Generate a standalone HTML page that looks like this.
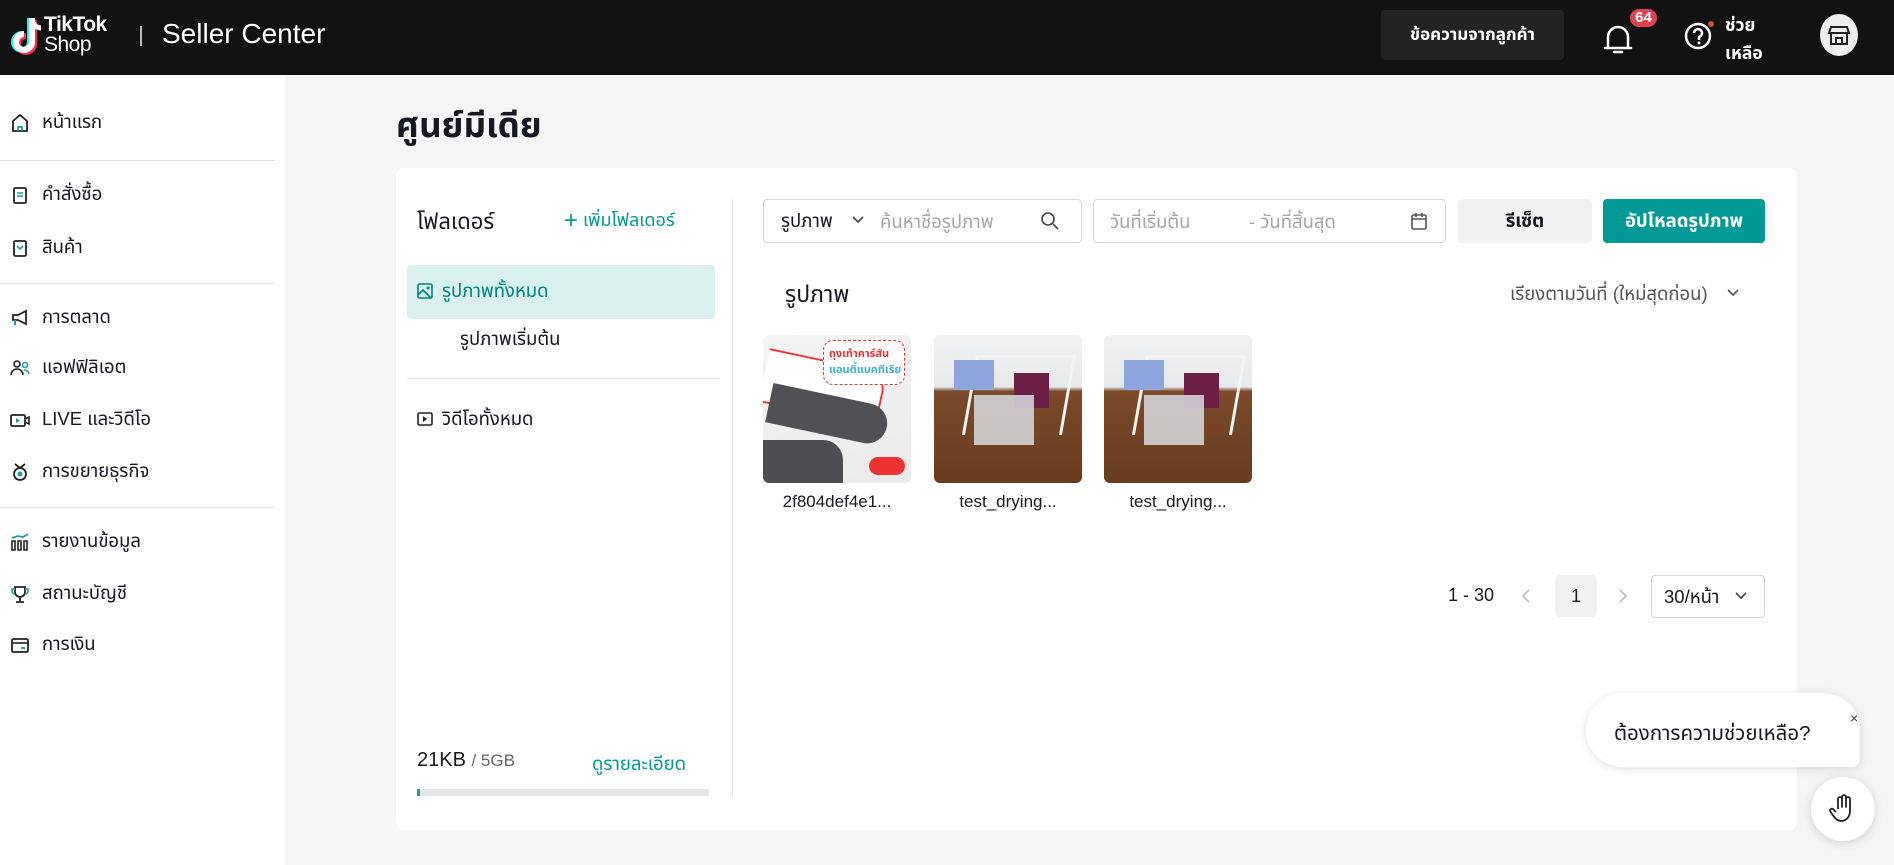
<!DOCTYPE html>
<html><head><meta charset="utf-8"><style>
*{box-sizing:border-box;margin:0;padding:0}
body{width:1894px;height:865px;overflow:hidden;background:#f5f5f5;font-family:"Liberation Sans","Noto Sans Thai",sans-serif;color:#161823;position:relative}
.a{position:absolute}
.hdr{left:0;top:0;width:1894px;height:75px;background:#121212}
.side{left:0;top:75px;width:285px;height:790px;background:#fff}
.si{position:absolute;left:10px;display:flex;align-items:center;font-size:18.5px;height:30px}
.si svg{width:20px;height:20px;margin-right:12px}
.hr{position:absolute;left:0;width:275px;height:1px;background:#e3e3e3}
.card{left:396px;top:168px;width:1401px;height:662px;background:#fff;border-radius:8px}
.inp{border:1px solid #d6d6d6;border-radius:4px;background:#fff}
.ph{color:#a6a6a6;font-size:17px}
.thumb{width:148px;height:148px;border-radius:6px;overflow:hidden;top:335px}
.lbl{top:492px;font-size:17px;width:148px;text-align:center}
</style></head><body>
<div class="a hdr"></div>
<svg class="a" style="left:10px;top:16px" width="34" height="42" viewBox="0 0 34 42"><path d="M22 2v24a8 8 0 1 1-8-8" fill="none" stroke="#25f4ee" stroke-width="6" transform="translate(-2,0)"/><path d="M22 2v24a8 8 0 1 1-8-8" fill="none" stroke="#fe2c55" stroke-width="6" transform="translate(2,2)"/><path d="M22 2v24a8 8 0 1 1-8-8" fill="none" stroke="#fff" stroke-width="6"/><path d="M22 4c1 5 5 8 9 8" fill="none" stroke="#fff" stroke-width="5"/></svg>
<div class="a" style="left:44px;top:15px;color:#fff;font-weight:bold;font-size:21px;line-height:20px;letter-spacing:-0.5px">TikTok<br><span style="font-weight:normal">Shop</span></div>
<div class="a" style="left:140px;top:26px;width:2px;height:20px;background:#bbb"></div>
<div class="a" style="left:162px;top:18px;color:#fff;font-size:28px">Seller Center</div>
<div class="a" style="left:1381px;top:10px;width:183px;height:50px;background:#232323;border-radius:4px;color:#fff;font-size:17px;font-weight:bold;text-align:center;line-height:50px">ข้อความจากลูกค้า</div>
<svg class="a" style="left:1603px;top:22px" width="30" height="34" viewBox="0 0 30 34"><path d="M5 26V15a10 10 0 0 1 20 0v11zM2 26h26M11 30h8" fill="none" stroke="#fff" stroke-width="2.5" stroke-linecap="round"/></svg>
<div class="a" style="left:1628px;top:7px;width:31px;height:22px;background:#e0434f;border:2px solid #121212;border-radius:11px;color:#fff;font-size:15px;font-weight:bold;text-align:center;line-height:18px">64</div>
<svg class="a" style="left:1682px;top:18px" width="34" height="34" viewBox="0 0 34 34"><circle cx="16" cy="18" r="12" fill="none" stroke="#fff" stroke-width="2.5"/><path d="M12 15a4 4 0 1 1 5 4v3" fill="none" stroke="#fff" stroke-width="2.5"/><circle cx="17" cy="25" r="1.5" fill="#fff"/><circle cx="29" cy="6" r="3" fill="#e0434f"/></svg>
<div class="a" style="left:1725px;top:11px;color:#fff;font-size:17.5px;font-weight:bold;line-height:28px">ช่วย<br>เหลือ</div>
<div class="a" style="left:1820px;top:14px;width:38px;height:42px;border-radius:50%;background:#eee"></div>
<svg class="a" style="left:1826px;top:22px" width="26" height="26" viewBox="0 0 26 26"><path d="M5 5h16l2 6H3zM5 11v11h16V11M10 22v-6h6v6" fill="none" stroke="#222" stroke-width="2"/></svg>

<div class="a side"></div>
<div class="si" style="top:108px"><svg viewBox="0 0 20 20"><path d="M3 18V8l7-6 7 6v10z" fill="none" stroke="#222" stroke-width="1.8"/><path d="M8 18v-4h4v4" stroke="#17a39b" stroke-width="1.8" fill="none"/></svg>หน้าแรก</div>
<div class="hr" style="top:160px"></div>
<div class="si" style="top:180px"><svg viewBox="0 0 20 20"><rect x="4" y="3" width="12" height="15" rx="1.5" fill="none" stroke="#222" stroke-width="1.8"/><path d="M7 8h6M7 11h6" stroke="#17a39b" stroke-width="1.6"/></svg>คำสั่งซื้อ</div>
<div class="si" style="top:233px"><svg viewBox="0 0 20 20"><rect x="4" y="3" width="12" height="15" rx="1.5" fill="none" stroke="#222" stroke-width="1.8"/><path d="M7 8l3 3 3-3" stroke="#17a39b" stroke-width="1.6" fill="none"/></svg>สินค้า</div>
<div class="hr" style="top:283px"></div>
<div class="si" style="top:303px"><svg viewBox="0 0 20 20"><path d="M3 7h5l8-4v13l-8-4H3z" fill="none" stroke="#222" stroke-width="1.8"/><path d="M5 12v5" stroke="#17a39b" stroke-width="2"/></svg>การตลาด</div>
<div class="si" style="top:353px"><svg viewBox="0 0 20 20"><circle cx="7" cy="6" r="3" fill="none" stroke="#222" stroke-width="1.6"/><path d="M1 17a6 6 0 0 1 12 0" fill="none" stroke="#222" stroke-width="1.6"/><circle cx="15" cy="7" r="2.5" fill="none" stroke="#17a39b" stroke-width="1.6"/><path d="M14 12a5 5 0 0 1 5 4" fill="none" stroke="#17a39b" stroke-width="1.6"/></svg>แอฟฟิลิเอต</div>
<div class="si" style="top:405px"><svg viewBox="0 0 20 20"><rect x="1" y="5" width="14" height="11" rx="1.5" fill="none" stroke="#222" stroke-width="1.8"/><path d="M15 9l4-2v7l-4-2" fill="none" stroke="#222" stroke-width="1.6"/><path d="M6 8l4 2.5-4 2.5z" fill="#17a39b"/></svg>LIVE และวิดีโอ</div>
<div class="si" style="top:457px"><svg viewBox="0 0 20 20"><circle cx="10" cy="12" r="6" fill="none" stroke="#222" stroke-width="1.8"/><path d="M5 2l5 4 5-4" fill="none" stroke="#222" stroke-width="1.8"/><circle cx="10" cy="12" r="2.5" fill="#17a39b"/></svg>การขยายธุรกิจ</div>
<div class="hr" style="top:507px"></div>
<div class="si" style="top:527px"><svg viewBox="0 0 20 20"><path d="M2 9h3v9H2zM8 9h3v9H8zM14 9h3v9h-3z" fill="none" stroke="#222" stroke-width="1.6"/><path d="M2 6l6-2 5 1 5-3" fill="none" stroke="#17a39b" stroke-width="1.8"/></svg>รายงานข้อมูล</div>
<div class="si" style="top:579px"><svg viewBox="0 0 20 20"><path d="M5 3h10v5a5 5 0 0 1-10 0zM10 13v4M6 18h8" fill="none" stroke="#222" stroke-width="1.8"/><path d="M5 5H2v2a3 3 0 0 0 3 3M15 5h3v2a3 3 0 0 1-3 3" fill="none" stroke="#17a39b" stroke-width="1.6"/></svg>สถานะบัญชี</div>
<div class="si" style="top:630px"><svg viewBox="0 0 20 20"><rect x="2" y="4" width="16" height="13" rx="1.5" fill="none" stroke="#222" stroke-width="1.8"/><path d="M2 8h16" stroke="#222" stroke-width="1.6"/><path d="M11 13h4" stroke="#17a39b" stroke-width="1.8"/></svg>การเงิน</div>

<div class="a" style="left:396px;top:100px;font-size:35px;font-weight:bold">ศูนย์มีเดีย</div>
<div class="a card"></div>
<div class="a" style="left:417px;top:206px;font-size:22px">โฟลเดอร์</div>
<div class="a" style="left:564px;top:208px;font-size:18px;color:#009995"><span style="font-size:24px;line-height:17px;vertical-align:-2px">+</span> เพิ่มโฟลเดอร์</div>
<div class="a" style="left:407px;top:265px;width:308px;height:54px;background:#d9f0ee;border-radius:4px"></div>
<svg class="a" style="left:417px;top:283px" width="16" height="16" viewBox="0 0 16 16"><rect x="1" y="1" width="14" height="14" rx="1.5" fill="none" stroke="#00847f" stroke-width="1.6"/><path d="M1 12l5-5 8 8" fill="none" stroke="#00847f" stroke-width="1.6"/><circle cx="11" cy="5" r="1.5" fill="#00847f"/></svg>
<div class="a" style="left:442px;top:278px;font-size:18.5px;color:#00847f">รูปภาพทั้งหมด</div>
<div class="a" style="left:460px;top:326px;font-size:18.5px">รูปภาพเริ่มต้น</div>
<div class="a" style="left:407px;top:378px;width:313px;height:1px;background:#e3e3e3"></div>
<svg class="a" style="left:417px;top:411px" width="16" height="16" viewBox="0 0 16 16"><rect x="1" y="2" width="14" height="12" rx="1.5" fill="none" stroke="#222" stroke-width="1.6"/><path d="M6 5l4 3-4 3z" fill="#222"/></svg>
<div class="a" style="left:442px;top:406px;font-size:18.5px">วิดีโอทั้งหมด</div>
<div class="a" style="left:417px;top:749px;font-size:20px">21KB <span style="font-size:17px;color:#666">/ 5GB</span></div>
<div class="a" style="left:592px;top:751px;font-size:18.5px;color:#009995">ดูรายละเอียด</div>
<div class="a" style="left:417px;top:789px;width:292px;height:7px;background:#e6e6e6;border-radius:2px"></div>
<div class="a" style="left:417px;top:789px;width:3px;height:7px;background:#17a39b"></div>
<div class="a" style="left:732px;top:199px;width:1px;height:598px;background:#e3e3e3"></div>

<div class="a inp" style="left:763px;top:199px;width:319px;height:44px"></div>
<div class="a" style="left:781px;top:208px;font-size:18.5px">รูปภาพ</div>
<svg class="a" style="left:851px;top:215px" width="14" height="10" viewBox="0 0 14 10"><path d="M2 2l5 5 5-5" fill="none" stroke="#444" stroke-width="1.6"/></svg>
<div class="a ph" style="left:880px;top:209px;font-size:18.5px">ค้นหาชื่อรูปภาพ</div>
<svg class="a" style="left:1040px;top:211px" width="20" height="20" viewBox="0 0 20 20"><circle cx="8" cy="8" r="6" fill="none" stroke="#444" stroke-width="1.6"/><path d="M13 13l5 5" stroke="#444" stroke-width="1.6"/></svg>
<div class="a inp" style="left:1093px;top:199px;width:353px;height:44px"></div>
<div class="a ph" style="left:1110px;top:209px;font-size:18.5px">วันที่เริ่มต้น</div>
<div class="a ph" style="left:1249px;top:209px;font-size:18.5px">- วันที่สิ้นสุด</div>
<svg class="a" style="left:1410px;top:211px" width="18" height="20" viewBox="0 0 18 20"><rect x="2" y="4" width="14" height="14" rx="1.5" fill="none" stroke="#555" stroke-width="1.6"/><path d="M2 8h14M6 2v4M12 2v4" stroke="#555" stroke-width="1.6"/></svg>
<div class="a" style="left:1458px;top:199px;width:134px;height:44px;background:#f1f1f1;border-radius:4px;text-align:center;line-height:44px;font-size:18.5px;font-weight:bold">รีเซ็ต</div>
<div class="a" style="left:1603px;top:199px;width:162px;height:44px;background:#009995;border-radius:4px;text-align:center;line-height:44px;font-size:18.5px;font-weight:bold;color:#fff">อัปโหลดรูปภาพ</div>

<div class="a" style="left:785px;top:279px;font-size:23px">รูปภาพ</div>
<div class="a" style="left:1510px;top:281px;font-size:18.5px;color:#555;white-space:nowrap">เรียงตามวันที่ (ใหม่สุดก่อน)</div>
<svg class="a" style="left:1726px;top:288px" width="14" height="10" viewBox="0 0 14 10"><path d="M2 2l5 5 5-5" fill="none" stroke="#555" stroke-width="1.6"/></svg>

<div class="a thumb" style="left:763px;background:linear-gradient(160deg,#f4f4f4 0%,#eaeaea 100%)">
<div class="a" style="left:0;top:25px;width:120px;height:55px;background:#fff;border:2px solid #e33;border-left:none;border-radius:0 20px 20px 0;transform:rotate(12deg)"></div>
<div class="a" style="left:5px;top:60px;width:120px;height:40px;background:#505154;border-radius:0 25px 25px 0;transform:rotate(12deg)"></div>
<div class="a" style="left:0;top:105px;width:80px;height:50px;background:#4d4e51;border-radius:0 20px 0 0"></div>
<div class="a" style="left:60px;top:5px;width:82px;height:45px;background:#fff;border-radius:10px;border:1px dashed #e33"></div>
<div class="a" style="left:66px;top:10px;font-size:11px;font-weight:bold;color:#e33">ถุงเท้าคาร์สัน</div>
<div class="a" style="left:66px;top:26px;font-size:11px;font-weight:bold;color:#3ab0d8">แอนตี้แบคทีเรีย</div>
<div class="a" style="left:106px;top:122px;width:36px;height:18px;border-radius:9px;background:#e33"></div>
</div>
<div class="a thumb" style="left:934px;background:linear-gradient(180deg,#f0f1f3 0%,#e8e9eb 35%,#7a4a2a 38%,#6b3b20 100%)">
<div class="a" style="left:35px;top:20px;width:100px;height:80px;border:3px solid #f3f3f3;border-bottom:none;transform:skewX(-10deg)"></div>
<div class="a" style="left:20px;top:25px;width:40px;height:30px;background:#8ea4dd"></div>
<div class="a" style="left:80px;top:38px;width:35px;height:35px;background:#6c1e45"></div>
<div class="a" style="left:40px;top:60px;width:60px;height:50px;background:#d9dce2;opacity:.85"></div>
</div>
<div class="a thumb" style="left:1104px;background:linear-gradient(180deg,#f0f1f3 0%,#e8e9eb 35%,#7a4a2a 38%,#6b3b20 100%)">
<div class="a" style="left:35px;top:20px;width:100px;height:80px;border:3px solid #f3f3f3;border-bottom:none;transform:skewX(-10deg)"></div>
<div class="a" style="left:20px;top:25px;width:40px;height:30px;background:#8ea4dd"></div>
<div class="a" style="left:80px;top:38px;width:35px;height:35px;background:#6c1e45"></div>
<div class="a" style="left:40px;top:60px;width:60px;height:50px;background:#d9dce2;opacity:.85"></div>
</div>
<div class="a lbl" style="left:763px">2f804def4e1...</div>
<div class="a lbl" style="left:934px">test_drying...</div>
<div class="a lbl" style="left:1104px">test_drying...</div>

<div class="a" style="left:1448px;top:585px;font-size:18px">1 - 30</div>
<svg class="a" style="left:1520px;top:588px" width="12" height="16" viewBox="0 0 12 16"><path d="M9 2L3 8l6 6" fill="none" stroke="#bbb" stroke-width="1.6"/></svg>
<div class="a" style="left:1555px;top:575px;width:42px;height:42px;background:#f1f1f1;border-radius:4px;text-align:center;line-height:42px;font-size:18px">1</div>
<svg class="a" style="left:1617px;top:588px" width="12" height="16" viewBox="0 0 12 16"><path d="M3 2l6 6-6 6" fill="none" stroke="#bbb" stroke-width="1.6"/></svg>
<div class="a inp" style="left:1651px;top:575px;width:114px;height:43px"></div>
<div class="a" style="left:1664px;top:584px;font-size:18.5px">30/หน้า</div>
<svg class="a" style="left:1734px;top:591px" width="14" height="10" viewBox="0 0 14 10"><path d="M2 2l5 5 5-5" fill="none" stroke="#444" stroke-width="1.6"/></svg>

<div class="a" style="left:1586px;top:693px;width:274px;height:74px;background:#fff;border-radius:37px 37px 8px 37px;box-shadow:0 2px 10px rgba(0,0,0,.12)"></div>
<div class="a" style="left:1614px;top:719px;font-size:20.5px">ต้องการความช่วยเหลือ?</div>
<div class="a" style="left:1850px;top:710px;font-size:14px;color:#333">×</div>
<div class="a" style="left:1811px;top:777px;width:64px;height:64px;border-radius:50%;background:#fff;box-shadow:0 2px 10px rgba(0,0,0,.15)"></div>
<svg class="a" style="left:1829px;top:793px" width="28" height="30" viewBox="0 0 28 30"><path d="M9 16V6a2 2 0 0 1 4 0v8V4a2 2 0 0 1 4 0v10V6a2 2 0 0 1 4 0v12c0 6-4 10-9 10-4 0-6-3-9-7l-2-3a2 2 0 0 1 3-2l3 3" fill="none" stroke="#222" stroke-width="1.8" stroke-linejoin="round"/></svg>
</body></html>
